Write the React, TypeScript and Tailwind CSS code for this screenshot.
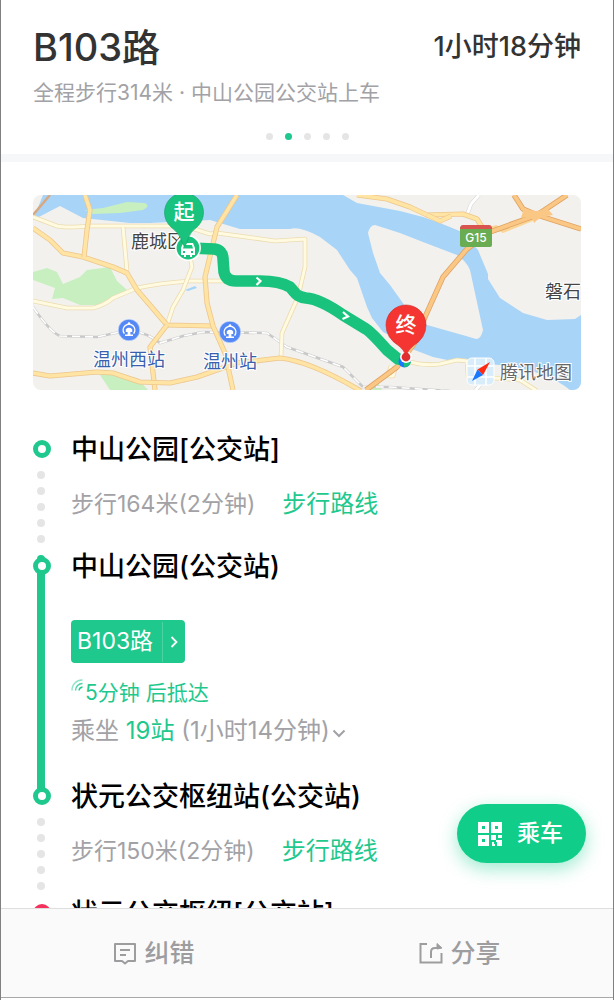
import type { ReactNode } from 'react';

const water = '#a8d4f7';
const land = '#f2f1ee';

const yellowRoads = [
  'M33 228L50 240L63 253L83 257L113 267L127 273L137 290L167 325L213 326',
  'M85 195L90 210L87 230L84 257',
  'M167 325L150 347L155 390',
  'M33 373L50 376L97 372L113 373L140 382L170 383L197 377L237 363L280 358Q310 361 361 391',
  'M237 195L217 227L205 277L207 303L213 326L225 353L233 390',
  'M357 195L387 199L410 207L427 215L463 214L477 219L482 227',
  'M427 215L440 221L451 216',
];

const paleRoads = [
  'M33 217L57 226Q66 228 90 226L185 226L210 234L217 233L275 241L305 239L305 267L298 297L282 333L281 358',
  'M123 227L127 271',
  'M33 301L67 308L93 308Q105 305 113 298L137 288Q160 283 190 281L225 281',
  'M190 256L192 267L183 290L173 307L167 325',
  'M410 362Q425 366 440 364L457 360L467 361L468 376L520 380L537 391',
  'M396 366L393 376L388 376L391 366',
];

const orangeRoads = [
  'M567 195L537 215L490 232L467 249L443 277L425 317L414 344L397 367L366 390',
  'M514 195L523 209L537 215L581 229',
];

const rail =
  'M33 307Q50 332 60 336L97 337L129 330Q148 333 160 343L183 336L203 332L267 333L287 347L343 367L363 387L390 387L450 391';

const route =
  'M190 248L214 249Q223 250 223 259L224 272Q226 281 236 281L260 281Q280 281 290 287C296 293 296 297 306 298Q320 299 343 315L366 329Q372 333 387 350L398 359L406 361';

function Road({ d, width, fill, edge }: { d: string; width: number; fill: string; edge: string }) {
  return (
    <g fill="none" strokeLinejoin="round">
      <path d={d} stroke={edge} strokeWidth={width + 1.6} />
      <path d={d} stroke={fill} strokeWidth={width} />
    </g>
  );
}

function StationMark({ x, y }: { x: number; y: number }) {
  return (
    <g transform={`translate(${x} ${y})`}>
      <circle r="10.8" fill="#5488f5" stroke="#dfe8fb" strokeWidth="0.6" />
      <path d="M-4.6 3.6A5.8 5.8 0 1 1 4.6 3.6" fill="none" stroke="#fff" strokeWidth="1.5" />
      <path d="M-3.2 -0.8Q0 -3.6 3.2 -0.8V2H-3.2ZM-1.4 2H1.4V4.6H4V6H-4V4.6H-1.4Z" fill="#fff" />
      <circle cy="-6.4" r="1.3" fill="#fff" />
    </g>
  );
}

function RouteMap() {
  return (
    <svg
      viewBox="33 195 548 195"
      role="img"
      aria-label="路线地图"
      className="block w-full rounded-lg font-['Noto_Sans_CJK_SC',sans-serif]"
    >
      <rect x="33" y="195" width="548" height="195" fill={land} />
      <path
        d="M43 195H343L357 203L400 211L423 217L440 223L462 232L478 250L488 274L488 279L500 298L523 313L547 320L575 319L581 315V390H570Q545 370 500 365L457 362L433 357L412 349L395 338L383 332L372 318L367 307L357 278L350 270L337 250L320 237Q300 226 290 229L240 229L210 220L150 223L130 223L83 218L60 206L33 220Z"
        fill={water}
      />
      <path
        d="M368 233Q370 225 375 225L400 233L423 242L457 255Q467 262 470 270L475 293L483 330Q481 339 476 339L466 336L427 325L410 313L390 285L380 273L373 253Z"
        fill={land}
      />
      <g fill="#c8efc0">
        <path d="M85 210L103 208L127 202L145 203Q151 206 143 210L120 213L93 214Z" />
        <path d="M33 272L47 268L57 272L63 284L80 277L87 270L110 267L117 281L127 290L97 305L80 305L63 298L52 299L55 288L33 280Z" />
        <path d="M100 375L110 373L137 378L148 390H110Z" />
        <path d="M365 390L378 383L382 390Z" />
      </g>
      <path d="M185 290L195 286L197 288L188 291Z" fill={water} />

      <path d={rail} fill="none" stroke="#c9c9c9" strokeWidth="2.6" />
      <path d={rail} fill="none" stroke="#fff" strokeWidth="1.6" strokeDasharray="8 5" />
      <path d="M33 215L50 195" stroke="#d6a983" strokeWidth="2.5" />
      <path d="M479 195L471 204L467 215M475 391L484 380" fill="none" stroke="#d4d4d4" strokeWidth="4" />
      <path d="M479 195L471 204L467 215M475 391L484 380" fill="none" stroke="#fff" strokeWidth="3" />
      {paleRoads.map((d) => <Road key={d} d={d} width={3} fill="#fffae0" edge="#ecdcb0" />)}
      {yellowRoads.map((d) => <Road key={d} d={d} width={3.6} fill="#ffe4a4" edge="#edc68c" />)}
      <path d="M488 229L496 227L503 231L533 219" fill="none" stroke="#fbd595" strokeWidth="3.6" />
      {orangeRoads.map((d) => <Road key={d} d={d} width={3.8} fill="#fac784" edge="#e0a263" />)}
      <path d="M524 208Q537 214 547 208L553 215Q540 216 534 223Q533 215 521 218Z" fill="#fac784" />

      <StationMark x={129} y={330} />
      <StationMark x={230} y={332} />
      <g fontSize="18" fill="#3a60ad" stroke="#fff" strokeWidth="2" paintOrder="stroke" textAnchor="middle">
        <text x="129" y="366">温州西站</text>
        <text x="230" y="368">温州站</text>
      </g>
      <g fontSize="18" fill="#444" stroke="#fff" strokeWidth="2" paintOrder="stroke">
        <text x="131" y="248">鹿城区</text>
        <text x="545" y="298">磐石</text>
      </g>

      <path d="M460 227H492V245Q492 247 490 247H463Q460 247 460 245Z" fill="#69ac52" />
      <path d="M463 225H489Q492 225 492 229H460Q460 225 463 225Z" fill="#d9534f" />
      <text x="476" y="242" textAnchor="middle" fontSize="12" fill="#fff" fontFamily="Inter" fontWeight="500">G15</text>

      <path d={route} fill="none" stroke="#19c37d" strokeWidth="11.5" strokeLinejoin="round" />
      <g fill="none" stroke="#fff" strokeWidth="2.2">
        <path d="M256.500 277.500L260.500 281L256.500 285" />
        <path d="M343 312L348 316.500L342.500 319" />
      </g>

      <circle cx="188" cy="248" r="13" fill="#fff" />
      <circle cx="188" cy="248" r="11.4" fill="#19c37d" />
      <path d="M183 243H193L195 248V255H192V257H190V255H186V257H184V255H181V248Z" fill="#fff" />
      <path d="M184 245H192L193 248.500H183ZM183 251H185V253H183ZM191 251H193V253H191Z" fill="#19c37d" />
      <path
        d="M184.500 246Q183 246 181 239Q179 233 171 227A19.500 19.500 0 1 1 197 227Q190 232 188 239Q186 246 184.500 246Z"
        fill="#19c37d"
        stroke="#0da565"
        strokeWidth="0.6"
      />

      <circle cx="404.500" cy="361.500" r="6" fill="#1c75ff" />
      <path d="M404 362H411Q410 367 404 367Z" fill="#19c37d" />
      <circle cx="406" cy="357" r="6" fill="#fff" />
      <path
        d="M406 356Q404 350 399 346Q386 338 386 325A20 20 0 0 1 426 325Q426 338 413 346Q408 350 406 356Z"
        fill="#f53532"
        stroke="#cf2926"
        strokeWidth="0.6"
      />
      <circle cx="406" cy="357" r="4.400" fill="#e02f2f" />
      <g fontSize="21" fontWeight="500" fill="#fff" textAnchor="middle">
        <text x="184" y="219">起</text>
        <text x="406" y="332">终</text>
      </g>

      <rect x="467" y="358" width="27" height="27" rx="5" fill="#d9ecfa" stroke="#fff" />
      <path d="M475 358V385M486 358V385M467 366H494M467 377H494" stroke="#fff" strokeWidth="1.5" />
      <path d="M490 362L477.500 369.500L483 375Z" fill="#ff2a12" />
      <path d="M472 381L477.500 369.500L483 375Z" fill="#1679ff" />
      <text x="500" y="379" fontSize="18" fill="#666" stroke="#fff" strokeWidth="2" paintOrder="stroke">腾讯地图</text>
    </svg>
  );
}

function Node({ color = 'border-[#1fc88d]' }: { color?: string }) {
  return <span className={`z-10 block size-[18px] shrink-0 rounded-full border-[5px] bg-white ${color}`} />;
}

function WalkDots() {
  return (
    <div className="mt-[13px] flex flex-col gap-2 pr-[2px]">
      {[1, 2, 3, 4, 5].map((n) => <span key={n} className="size-2 rounded-full bg-[#e5e5e5]" />)}
    </div>
  );
}

function Stop({ name, rail, color, children }: { name: string; rail?: ReactNode; color?: string; children?: ReactNode }) {
  return (
    <li className="flex gap-5">
      <div className="flex w-[18px] shrink-0 flex-col items-center pt-[9px]">
        <Node color={color} />
        {rail}
      </div>
      <div className="min-w-0 flex-1">
        <h2 className="text-[27px] leading-[38px] font-medium text-black">{name}</h2>
        {children}
      </div>
    </li>
  );
}

function Walk({ text }: { text: string }) {
  return (
    <p className="mt-[18px] flex gap-[27px] pb-[27px] text-[23px] leading-[34px] text-[#a2a2a6]">
      {text}
      <a href="#walk" className="text-2xl leading-[34px] text-[#1fc88d]">步行路线</a>
    </p>
  );
}

export default function App() {
  return (
    <div className="flex h-screen flex-col border-x border-[#808080] bg-white pb-[2px] font-[Inter,'Noto_Sans_CJK_SC',sans-serif]">
      <header className="border-b-8 border-[#f6f7f9] px-8 pt-[21px]">
        <div className="flex items-center justify-between leading-[52px] font-medium text-[#333]">
          <h1 className="text-[38px]">B103路</h1>
          <span className="text-[27px]">1小时18分钟</span>
        </div>
        <p className="mt-1 text-[21px] leading-8 text-[#a2a2a6]">全程步行314米 · 中山公园公交站上车</p>
        <div className="flex justify-center gap-3 pt-6 pb-[14px]">
          {[0, 1, 2, 3, 4].map((n) => (
            <span key={n} className={`size-[7px] rounded-full ${n === 1 ? 'bg-[#1fc88d]' : 'bg-[#e5e5e5]'}`} />
          ))}
        </div>
      </header>

      <main className="relative min-h-0 flex-1">
        <div className="h-full overflow-y-auto px-8 pt-[33px] [scrollbar-width:none]">
          <RouteMap />
          <ol className="mt-[41px]">
            <Stop name="中山公园[公交站]" rail={<WalkDots />}>
              <Walk text="步行164米(2分钟)" />
            </Stop>
            <Stop
              name="中山公园(公交站)"
              rail={<span className="-mt-5 mr-[2px] -mb-4 w-2 flex-1 rounded-t-full bg-[#1fc88d]" />}
            >
              <button className="mt-[34px] flex h-[43px] items-center rounded bg-[#1fc88d] text-[23px] text-white">
                <span className="pr-[9px] pl-[6px]">B103路</span>
                <span className="flex h-10 w-[23px] items-center justify-center border-l border-white/20">
                  <svg viewBox="0 0 8 12" className="h-3 w-2" fill="none" stroke="currentColor" strokeWidth="1.8">
                    <path d="M1.500 1L6.500 6L1.500 11" />
                  </svg>
                </span>
              </button>
              <p className="mt-[15px] flex text-[21px] leading-[30px] text-[#1fc88d]">
                <svg viewBox="0 0 14 14" className="mt-px size-[14px]" fill="none" stroke="currentColor" strokeWidth="1.4">
                  <path d="M1 11.500A10 10 0 0 1 11.500 1" opacity=".5" />
                  <path d="M4.500 11.500A7 7 0 0 1 11.500 4.500" opacity=".8" />
                  <path d="M8 11.500A4 4 0 0 1 11.500 8" />
                </svg>
                5分钟 后抵达
              </p>
              <button className="mt-[6px] mb-[30px] flex items-center text-2xl leading-[34px] text-[#a2a2a6]">
                <span>乘坐 <span className="text-[#1fc88d]">19站</span> (1小时14分钟)</span>
                <svg viewBox="0 0 14 9" className="mt-1 ml-[2px] h-[9px] w-[14px]" fill="none" stroke="currentColor" strokeWidth="2">
                  <path d="M1.500 1.500L7 7L12.500 1.500" />
                </svg>
              </button>
            </Stop>
            <Stop name="状元公交枢纽站(公交站)" rail={<WalkDots />}>
              <Walk text="步行150米(2分钟)" />
            </Stop>
            <Stop name="状元公交枢纽[公交站]" color="border-[#f5325b]" />
          </ol>
        </div>

        <button className="absolute right-[27px] bottom-[45px] flex h-[59px] w-[129px] items-center gap-[15px] rounded-full bg-[#10ce8a] pl-[21px] text-[23px] font-medium text-white shadow-[0_6px_18px_rgba(16,206,138,0.4)]">
          <svg viewBox="0 0 24 24" className="size-6" fill="currentColor" fillRule="evenodd">
            <path d="M0 0H11V11H0ZM4 4V7H7V4ZM13 0H24V11H13ZM17 4V7H20V4ZM0 13H11V24H0ZM4 17V20H7V17Z" />
            <path d="M13 13H18V18H13ZM20 13H24V16H20ZM18 18H24V24H19V20H18ZM14 20H16V22H17V24H14Z" />
          </svg>
          乘车
        </button>
      </main>

      <footer className="grid h-[90px] grid-cols-2 border-t border-b border-t-[#dedede] border-b-[#a8a8a8] bg-[#fafafa] pt-[2px] text-[25px] font-medium text-[#9d9da0]">
        <button className="flex items-center justify-center gap-[7px]">
          <svg viewBox="0 0 24 24" className="size-6" fill="none" stroke="currentColor" strokeWidth="2">
            <path d="M2 2H22V19H15L12 21.500L9 19H2Z" strokeLinejoin="round" />
            <path d="M7 8H17M7 13H13" />
          </svg>
          纠错
        </button>
        <button className="flex items-center justify-center gap-[7px]">
          <svg viewBox="0 0 24 24" className="size-6" fill="none" stroke="currentColor" strokeWidth="2">
            <path d="M8 2H1.500V20.500H22.500V11" />
            <path d="M12 16V10Q12 6 16 6H20" />
            <path d="M18 1.500L23 6L18 7Z" fill="currentColor" strokeWidth="1" />
          </svg>
          分享
        </button>
      </footer>
    </div>
  );
}
